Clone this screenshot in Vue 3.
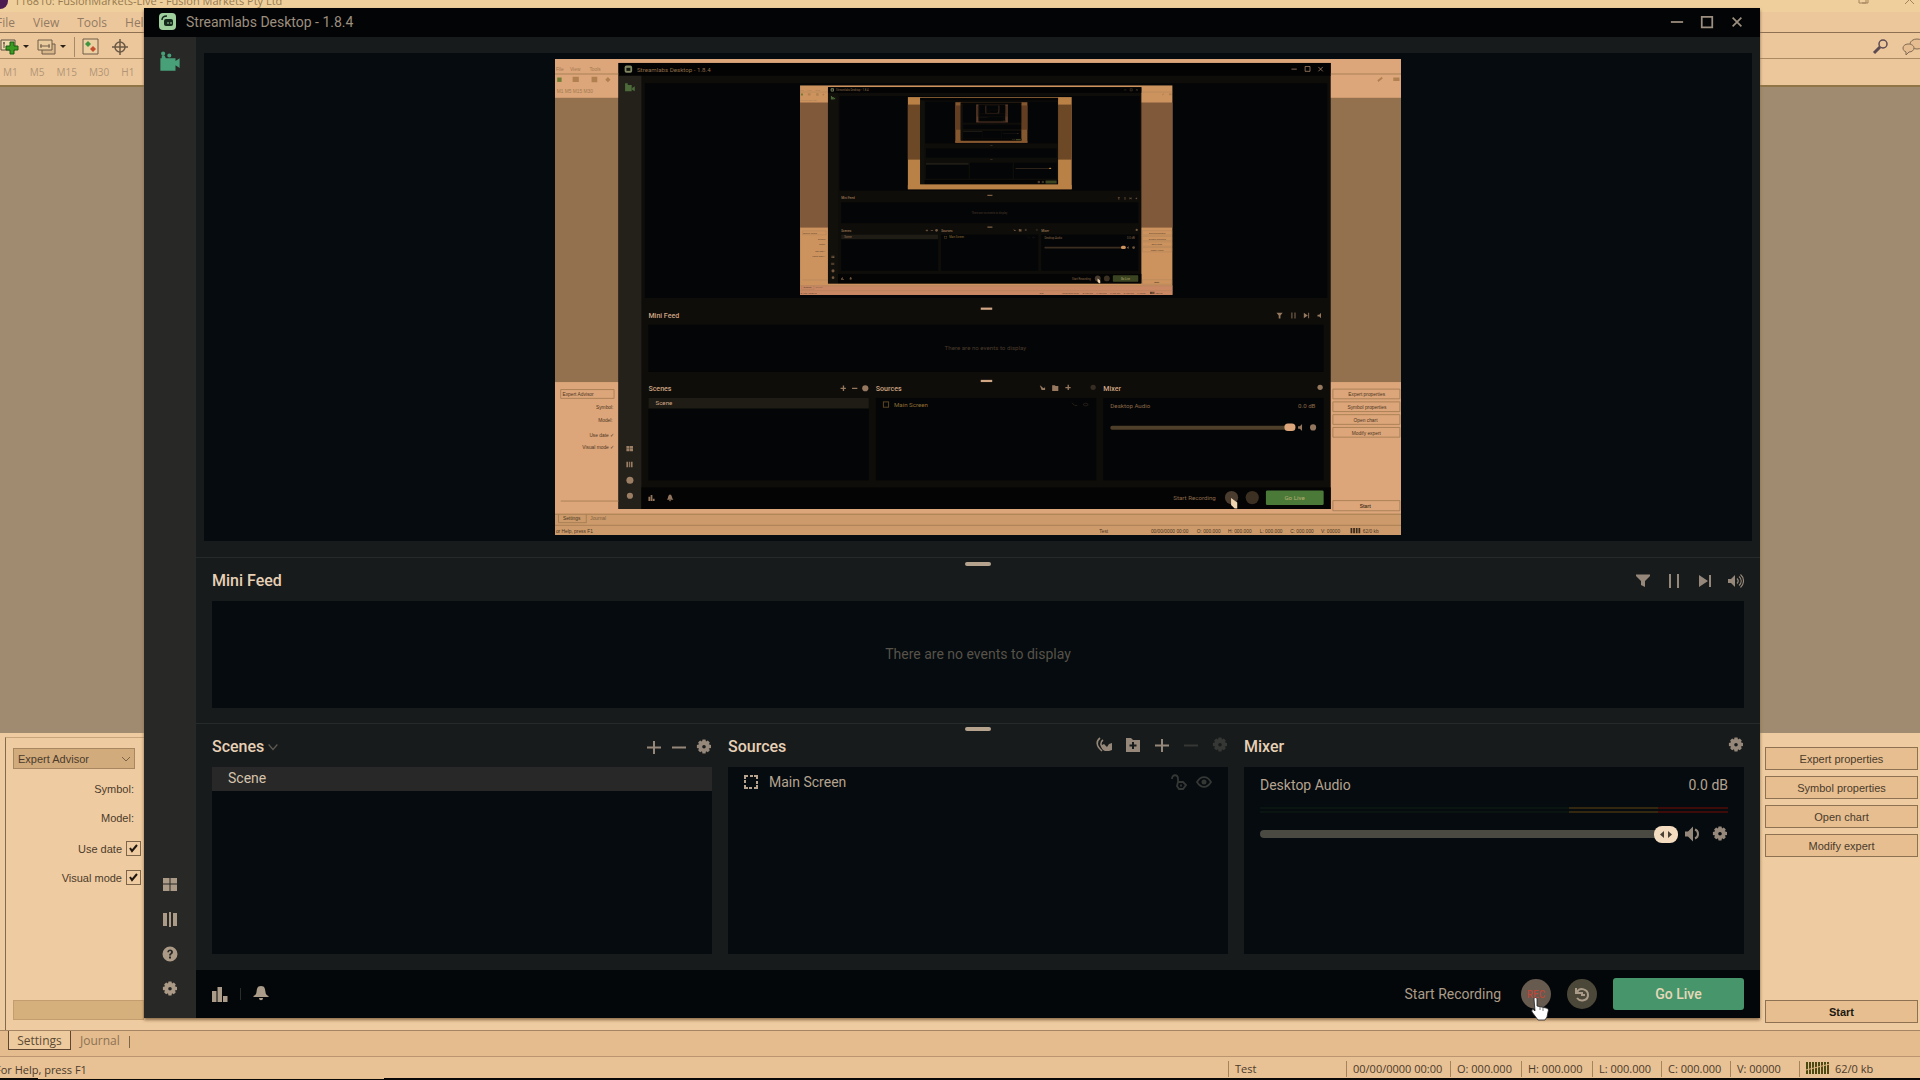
<template>
  <div class="desktop">
    <!-- Trading terminal in the background -->
    <section class="terminal">
      <div class="t-title">
        <span class="t-logo"></span>
        <span>116810: FusionMarkets-Live - Fusion Markets Pty Ltd</span>
        <svg class="t-title-btns" viewBox="0 0 62 12" aria-hidden="true">
          <path d="M1 -4h7v7h-7zM4 3h6v-7M47 4l9-9M56 4l-9-9" />
        </svg>
      </div>
      <nav class="t-menu">
        <a v-for="m in menus" :key="m" href="#">{{ m }}</a>
      </nav>
      <div class="t-tools">
        <button class="tool wide" aria-label="New order">
          <svg width="30" height="18" viewBox="0 0 30 18">
            <path d="M1 2h14v10H1z" fill="#efd9b0" stroke="#5c5040" />
            <path d="M4 4v6M3 5h2" stroke="#5c5040" />
            <path d="M10 4h4v4h4v4h-4v4h-4v-4H6V8h4z" fill="#3a9a22" stroke="#1d5a12" />
            <path d="M23 7h6l-3 3z" fill="#2a2218" />
          </svg>
        </button>
        <button class="tool wide" aria-label="Charts">
          <svg width="30" height="18" viewBox="0 0 30 18">
            <path d="M5 6h13v10H5z" fill="#d9b78a" stroke="#6e5d48" />
            <path d="M1 2h14v10H1z" fill="#e9cb9d" stroke="#6e5d48" />
            <path d="M3 8h10M4 6v4M12 6v4" stroke="#6e5d48" />
            <path d="M23 7h6l-3 3z" fill="#2a2218" />
          </svg>
        </button>
        <span class="tool-sep"></span>
        <button class="tool" aria-label="Market watch">
          <svg width="18" height="18" viewBox="0 0 18 18">
            <path d="M1 1h15v15H1z" fill="#ecd0a2" stroke="#6e5d48" />
            <path d="M6 3l3 3-3 3-3-3z" fill="#3f9440" />
            <path d="M11 8l3 3-3 3-3-3z" fill="#c4502e" />
          </svg>
        </button>
        <button class="tool cross" aria-label="Crosshair">
          <svg width="18" height="18" viewBox="0 0 18 18" fill="none" stroke="#6b5a44" stroke-width="1.5">
            <circle cx="9" cy="9" r="5" />
            <path d="M9 1v16M1 9h16" />
          </svg>
        </button>
        <span class="grow"></span>
        <button class="tool" aria-label="Search">
          <svg width="18" height="18" viewBox="0 0 18 18" fill="none" stroke="#5b4a52">
            <circle cx="12" cy="6" r="4" stroke-width="1.5" />
            <path d="M9 9l-6 6" stroke-width="3" />
          </svg>
        </button>
        <button class="tool chat" aria-label="Chat">
          <svg width="22" height="18" viewBox="0 0 22 18" fill="#e6bd90" stroke="#806a52">
            <ellipse cx="15" cy="6" rx="7" ry="5" />
            <path d="M6 6c4 0 6 2 6 4s-2 4-5 4l-3 3v-3c-2-1-3-2-3-4s2-4 5-4z" />
          </svg>
        </button>
      </div>
      <div class="t-frames">
        <button v-for="f in timeframes" :key="f">{{ f }}</button>
      </div>
      <div class="t-work"></div>

      <div class="tester">
        <form class="tester-left" @submit.prevent>
          <div class="combo">
            <select aria-label="Program type">
              <option>Expert Advisor</option>
            </select>
          </div>
          <label class="row">Symbol:</label>
          <label class="row">Model:</label>
          <label class="row check">Use date <input type="checkbox" checked /></label>
          <label class="row check">Visual mode <input type="checkbox" checked /></label>
          <span class="grow"></span>
          <div class="progress"></div>
        </form>
        <div class="tester-right">
          <button v-for="b in testerButtons" :key="b">{{ b }}</button>
          <span class="grow"></span>
          <button class="start">Start</button>
        </div>
      </div>

      <div class="t-tabs">
        <button class="active">Settings</button>
        <button>Journal</button>
        <span class="tab-sep"></span>
      </div>
      <footer class="t-status">
        <span class="help">For Help, press F1</span>
        <span v-for="c in status" :key="c.text" class="cell" :class="c.size">{{ c.text }}</span>
        <span class="cell conn">
          <svg width="24" height="14" viewBox="0 0 24 14" aria-hidden="true">
            <path d="M1 1v12M4 1v12M7 1v12M10 1v12M13 1v12M16 1v12M19 1v12M22 1v12" stroke="#4c4a10" stroke-width="2" />
            <path d="M0 9L24 3" stroke="#dfb57f" />
          </svg>
          62/0 kb
        </span>
      </footer>
      <div class="taskbar"><span></span></div>
    </section>

    <!-- Streamlabs window -->
    <main class="window">
      <header class="w-title">
        <svg width="17" height="17" viewBox="0 0 17 17" aria-hidden="true">
          <rect width="17" height="17" rx="4" fill="#9ecf9c" />
          <path d="M3 7c0-3 2-4 5-4" fill="none" stroke="#14281c" stroke-width="1.5" />
          <rect x="5" y="6" width="9" height="7" rx="2" fill="#14281c" />
          <path d="M9 9v2M12 9v2" stroke="#9ecf9c" />
        </svg>
        <h1>Streamlabs Desktop - 1.8.4</h1>
        <button aria-label="Minimize"><Icon name="winMin" :size="14" /></button>
        <button aria-label="Maximize"><Icon name="winMax" :size="14" /></button>
        <button aria-label="Close"><Icon name="winClose" :size="14" /></button>
      </header>

      <div class="w-body">
        <nav class="side">
          <button class="editor" aria-label="Editor"><Icon name="camera" :size="22" /></button>
          <span class="grow"></span>
          <button v-for="s in sideItems" :key="s.icon" :aria-label="s.label"><Icon :name="s.icon" /></button>
        </nav>

        <div class="content">
          <div class="preview">
            <svg class="canvas" viewBox="0 0 1920 1080" role="img" aria-label="Main Screen preview">
              <g v-for="(f, i) in frames" :key="i" :transform="f.transform">
                <rect width="1920" height="1080" :fill="f.light" />
                <rect y="88" width="1920" height="645" :fill="f.work" />
                <rect y="1031" width="1920" height="49" :fill="f.bar" />
                <rect x="144" y="9" width="1616" height="1012" fill="#0e0d0a" />
                <rect x="144" y="9" width="1616" height="29" fill="#030304" />
                <rect x="144" y="38" width="52" height="983" :fill="i ? '#12100b' : '#24211a'" />
                <rect x="204" y="55" width="1548" height="487" fill="#040506" />
                <rect x="212" y="603" width="1532" height="107" fill="#040506" />
                <rect v-for="x in [212, 728, 1244]" :key="x" :x="x" y="769" width="500" height="187" fill="#040506" />
                <rect x="196" y="972" width="1564" height="49" fill="#040404" />
                <rect x="212" y="769" width="500" height="24" fill="#1f1c16" />
                <rect x="966" y="564" width="26" height="5" :fill="f.ink" />
                <rect x="966" y="728" width="26" height="5" :fill="f.ink" />
                <rect x="1260" y="832" width="400" height="9" rx="4" :fill="i ? '#3b2e20' : '#4e3f2a'" />
                <rect x="1655" y="827" width="25" height="17" rx="8" :fill="f.light" />
                <rect x="1613" y="979" width="131" height="33" rx="3" :fill="i ? '#3b4420' : '#4b7a38'" />
                <circle cx="1535" cy="995" r="15" fill="#4a3c2e" />
                <circle cx="1582" cy="995" r="15" fill="#3b3022" />
                <template v-if="i < 2">
                  <g :fill="f.ink" class="mini-ui">
                    <text x="186" y="30" fill="#8f6c46">Streamlabs Desktop - 1.8.4</text>
                    <text x="212" y="588" class="b">Mini Feed</text>
                    <text x="884" y="661" fill="#4a3a2b">There are no events to display</text>
                    <text x="212" y="754" class="b">Scenes</text>
                    <text x="228" y="786">Scene</text>
                    <text x="728" y="754" class="b">Sources</text>
                    <text x="769" y="789" fill="#8f6f35">Main Screen</text>
                    <text x="1244" y="754" class="b">Mixer</text>
                    <text x="1260" y="792" fill="#8c6a48">Desktop Audio</text>
                    <text x="1686" y="792" fill="#8c6a48">0.0 dB</text>
                    <text x="1403" y="1001" fill="#8c6a48">Start Recording</text>
                    <text x="1655" y="1001" fill="#b7ad70">Go Live</text>
                  </g>
                  <g class="mini-os" fill="#4b351f">
                    <text x="17" y="765">Expert Advisor</text>
                    <text x="93" y="795">Symbol:</text>
                    <text x="98" y="824">Model:</text>
                    <text x="78" y="857">Use date ✓</text>
                    <text x="62" y="886">Visual mode ✓</text>
                    <text x="18" y="1047">Settings</text>
                    <text x="80" y="1047" fill="#80603f">Journal</text>
                    <text x="2" y="1076">or Help, press F1</text>
                    <text x="1800" y="765">Expert properties</text>
                    <text x="1798" y="795">Symbol properties</text>
                    <text x="1812" y="824">Open chart</text>
                    <text x="1808" y="853">Modify expert</text>
                    <text x="1826" y="1018" class="b">Start</text>
                    <text x="1235" y="1076">Test</text>
                    <text x="1352" y="1076">00/00/0000 00:00</text>
                    <text x="1456" y="1076">O: 000.000</text>
                    <text x="1527" y="1076">H: 000.000</text>
                    <text x="1599" y="1076">L: 000.000</text>
                    <text x="1668" y="1076">C: 000.000</text>
                    <text x="1738" y="1076">V: 00000</text>
                    <text x="1833" y="1076">62/0 kb</text>
                    <text x="2" y="28" fill="#a0794f">File</text>
                    <text x="34" y="28" fill="#a0794f">View</text>
                    <text x="78" y="28" fill="#a0794f">Tools</text>
                    <text x="4" y="78" fill="#a0794f">M1 M5 M15 M30</text>
                  </g>
                  <g fill="none" stroke="#a57c52" stroke-width="2">
                    <path d="M0 34h144M1760 34h160M0 1033h1920M0 1058h1920M8 1033v19h63v-19" />
                    <path d="M13 750h121v20H13zM13 1003h131M1765 749h152v22h-152zM1765 778h152v22h-152zM1765 807h152v22h-152zM1765 836h152v22h-152zM1765 1002h152v23h-152z" />
                    <path d="M1805 1070h24" stroke="#3b2a1a" stroke-width="12" stroke-dasharray="4 2" />
                  </g>
                  <g :fill="f.ink" opacity="0.7">
                    <path d="M159 59h15v14h-15zM175 66l6-4v11l-6-3zM159 55h6v4h-6z" fill="#5d8a48" />
                    <rect x="158" y="15" width="17" height="16" rx="4" fill="#b5bf8a" />
                    <path d="M162 20h9v7h-9z" fill="#1a2214" />
                    <path d="M162 878h7v5h-7zM170 878h7v5h-7zM162 884h7v6h-7zM170 884h7v6h-7zM162 914h4v12h-4zM168 914h2v12h-2zM172 914h4v12h-4zM212 993h4v10h-4zM217 989h4v14h-4zM222 998h4v5h-4zM254 1000c3-2 2-12 7-12s4 10 8 12zM258 1001h6l-3 3z" />
                    <circle cx="170" cy="956" r="8" />
                    <circle cx="170" cy="991" r="7" />
                    <circle cx="704" cy="747" r="7" />
                    <circle cx="1736" cy="745" r="6" />
                    <circle cx="1720" cy="836" r="7" />
                    <circle cx="1221" cy="745" r="6" opacity="0.3" />
                    <path d="M648 746h12v3h-12zM653 741h3v12h-3zM674 746h12v3h-12zM1637 576h14l-5 6v7h-4v-7zM1671 575h2v14h-2zM1678 575h2v14h-2zM1699 576l9 6-9 6zM1709 576h2v12h-2zM1730 580h4l4-4v12l-4-4h-4zM1686 833h4l5-5v16l-5-5h-4zM1128 740h6l2 2h6v11h-14zM1158 744h12v3h-12zM1163 739h3v12h-3zM1100 740l4 3 4 4 4-2v6h-8z" />
                    <path d="M1671 23h12M1702 17h11v11h-11zM1732 18l10 10M1742 18l-10 10" fill="none" :stroke="f.ink" stroke-width="2" />
                    <rect x="745" y="778" width="12" height="12" fill="none" stroke="#8f6f35" stroke-width="2" />
                    <path d="M1173 780l6 6h6M1198 784c4-4 8-4 12 0-4 4-8 4-12 0z" fill="none" stroke="#3a3024" stroke-width="2" />
                  </g>
                  <path d="M5 42h10v10H5z" fill="#6f7c34" />
                  <path d="M40 40h14v12H40zM83 40h13v13H83zM120 41l6 6-6 6-6-6zM1866 48l10-8 2 4-10 8zM1902 42h14v8h-14z" fill="#b08050" />
                  <path d="M1534 996v16l8 8h6v-14z" fill="#f0d5ae" />
                </template>
              </g>
            </svg>
          </div>

          <section class="feed">
            <span class="handle"></span>
            <div class="head">
              <h2>Mini Feed</h2>
              <span class="grow"></span>
              <button aria-label="Filter"><Icon name="filter" /></button>
              <button aria-label="Pause"><Icon name="pause" /></button>
              <button aria-label="Skip"><Icon name="skip" /></button>
              <button aria-label="Mute"><Icon name="volume" /></button>
            </div>
            <div class="box empty">There are no events to display</div>
          </section>

          <section class="docks">
            <span class="handle"></span>
            <div class="dock">
              <div class="head scenes-head">
                <h2>Scenes</h2>
                <button class="chev" aria-label="Scene collections"><Icon name="chevron" :size="10" /></button>
                <span class="grow"></span>
                <button aria-label="Add scene"><Icon name="plus" /></button>
                <button aria-label="Remove scene"><Icon name="minus" /></button>
                <button aria-label="Scene settings"><Icon name="gear" /></button>
              </div>
              <div class="box">
                <div class="scene">Scene</div>
              </div>
            </div>

            <div class="dock">
              <div class="head">
                <h2>Sources</h2>
                <span class="grow"></span>
                <div class="dock-tools">
                  <button aria-label="Studio mode"><Icon name="signal" /></button>
                  <button aria-label="Add group"><Icon name="folder" /></button>
                  <button aria-label="Add source"><Icon name="plus" /></button>
                  <button class="dim" aria-label="Remove source"><Icon name="minus" /></button>
                  <button class="dim" aria-label="Source settings"><Icon name="gear" /></button>
                </div>
              </div>
              <div class="box">
                <div class="source">
                  <Icon name="capture" />
                  <span>Main Screen</span>
                  <span class="grow"></span>
                  <button class="dim" aria-label="Lock"><Icon name="unlock" /></button>
                  <button class="dim" aria-label="Visibility"><Icon name="eye" /></button>
                </div>
              </div>
            </div>

            <div class="dock">
              <div class="head">
                <h2>Mixer</h2>
                <span class="grow"></span>
                <div class="dock-tools">
                  <button aria-label="Mixer settings"><Icon name="gear" /></button>
                </div>
              </div>
              <div class="box mixer">
                <div class="mix-row">
                  <label for="volume">Desktop Audio</label>
                  <span>0.0 dB</span>
                </div>
                <div class="meter"></div>
                <div class="meter"></div>
                <div class="mix-ctl">
                  <input id="volume" type="range" min="0" max="100" value="100" />
                  <button aria-label="Mute audio"><Icon name="speaker" /></button>
                  <button aria-label="Audio settings"><Icon name="gear" /></button>
                </div>
              </div>
            </div>
          </section>

          <footer class="w-foot">
            <button aria-label="Stats"><Icon name="stats" /></button>
            <span class="foot-sep"></span>
            <button aria-label="Notifications"><Icon name="bell" /></button>
            <span class="grow"></span>
            <span class="rec-label">Start Recording</span>
            <button class="round rec">
              REC
              <svg class="cursor" width="20" height="24" viewBox="0 0 20 24" aria-hidden="true">
                <path d="M4 2c0-2 3-2 3 0v7l9 2c2 0 3 2 2 4l-1 5-2 3H8L2 15c-1-2 1-3 2-2l1 1z" fill="#fff" stroke="#222" stroke-width=".8" />
                <path d="M10 10v3M13 11v3" stroke="#555" stroke-width=".8" />
              </svg>
            </button>
            <button class="round" aria-label="Replay buffer"><Icon name="replay" /></button>
            <button class="live">Go Live</button>
          </footer>
        </div>
      </div>
    </main>
  </div>
</template>

<script setup>
import { h } from 'vue'

const menus = ['File', 'View', 'Tools', 'Help']
const timeframes = ['M1', 'M5', 'M15', 'M30', 'H1']
const testerButtons = ['Expert properties', 'Symbol properties', 'Open chart', 'Modify expert']
const status = [
  { text: 'Test', size: 'profile' },
  { text: '00/00/0000 00:00', size: 'date' },
  { text: 'O: 000.000', size: 'mid' },
  { text: 'H: 000.000', size: 'mid' },
  { text: 'L: 000.000' },
  { text: 'C: 000.000' },
  { text: 'V: 00000' },
]
const sideItems = [
  { icon: 'grid', label: 'Layout' },
  { icon: 'columns', label: 'Studio' },
  { icon: 'help', label: 'Help' },
  { icon: 'gear', label: 'Settings' },
]

// f = filled path, s = stroked path, all on a 16x16 grid
const icons = {
  winMin: { s: 'M1 8h14' },
  winMax: { s: 'M2 2h12v12H2z' },
  winClose: { s: 'M3 3l10 10M13 3L3 13' },
  camera: { f: 'M1 6h11v2l3-2v7l-3-2v4H1zM1.500 2.500a1.500 1.500 0 1 1 3 0a1.500 1.500 0 1 1-3 0zM2 4h2l1 2H2zM6 4a1.500 1.500 0 1 1 3 0a1.500 1.500 0 1 1-3 0z' },
  grid: { f: 'M1 2h6.500v5.500H1zM8.500 2H15v5.500H8.500zM1 8.500h6.500V15H1zM8.500 8.500H15V15H8.500z' },
  columns: { f: 'M1 2h4v13H1zM7 1h2v15H7zM11 2h4v13h-4z' },
  help: { f: 'M8 .500a7.500 7.500 0 1 0 0 15a7.500 7.500 0 1 0 0-15zM7 10.500h2v2H7zM7 9.500c0-2 2-2 2-3.500 0-1.300-2-1.300-2 .300H5.300C5.300 2.500 11 2.700 11 6c0 2-2 2-2 3.500z' },
  gear: { f: 'M6.500.500h3l.5 2 1.800-1 2 2-1 1.800 2.200.6v3l-2.200.5 1 1.900-2 2-1.800-1-.5 2.200h-3l-.5-2.200-1.900 1-2-2 1-1.900-2.200-.5v-3l2.200-.6-1-1.800 2-2 1.900 1zM8 6a1.800 1.800 0 1 0 0 3.600a1.800 1.800 0 1 0 0-3.600z' },
  filter: { f: 'M1 1.500h14v1.500L10 8v6l-4-2V8L1 3z' },
  pause: { f: 'M3 1h2v14H3zM11 1h2v14h-2z' },
  skip: { f: 'M2 2l9 6-9 6zM12 2h2v12h-2z' },
  volume: { f: 'M0 6h3l4-4v12l-4-4H0z', s: 'M9 5.500c1.500 1.500 1.500 3.500 0 5M11 3.500c3 2.500 3 6.500 0 9M12.500 1.500c4 3.500 4 9.500 0 13', w: 1.1 },
  speaker: { f: 'M1 5.500h3l5-5v15l-5-5H1z', s: 'M11 3.500c4 1.500 4 7.500 0 9' },
  chevron: { s: 'M1 4l7 8 7-8' },
  plus: { s: 'M8 2v13M1 8.500h14', w: 2 },
  minus: { s: 'M1 8.500h14', w: 2 },
  signal: { f: 'M6 8l2-1 3 3 2-3 3-1v7l-3 1H9c-3-1-4-3-3-6z', s: 'M4 1C0 4 0 9 6 14M7 3C4 5 4 9 8 12', w: 1.6 },
  folder: { f: 'M1 1h5l2 2h7v12H1zM7 5v2.500H4.500v2H7V12h2V9.500h2.500v-2H9V5z' },
  capture: { s: 'M2 5V2h3M7 2h3M11 2h3v3M14 7v3M14 11v3h-3M9 14H6M5 14H2v-3M2 9V6' },
  unlock: { s: 'M1 5c0-5 6-5 6 0v2M7 8h5l3 3-3 4H8l-2-3zM10 10.500v2', w: 1.8 },
  eye: { s: 'M1 8c4-6.500 10-6.500 14 0-4 6.500-10 6.500-14 0z', f: 'M8 5.500a2.500 2.500 0 1 0 0 5a2.500 2.500 0 1 0 0-5z', w: 1.8 },
  stats: { f: 'M0 5h4.500v11H0zM5.500 1H10v15H5.500zM11 10h4.500v6H11z' },
  bell: { f: 'M8 0c4 0 4 3 4.500 6 .3 3 1.500 3 3 4v1H.500v-1c1.500-1 2.700-1 3-4C4 3 4 0 8 0zM6 12h4c0 3-4 3-4 0z' },
  replay: { s: 'M2 2v5h5M3 6c3-5 11-3 11 3 0 6-8 7-11 3M8 6v3h3', w: 2 },
}

const Icon = (props) => {
  const icon = icons[props.name]
  const size = props.size || 16
  return h('svg', { width: size, height: size, viewBox: '0 0 16 16', 'aria-hidden': 'true' }, [
    icon.f && h('path', { d: icon.f, fill: 'currentColor', 'fill-rule': 'evenodd' }),
    icon.s && h('path', { d: icon.s, fill: 'none', stroke: 'currentColor', 'stroke-width': icon.w || 2 }),
  ])
}
Icon.props = ['name', 'size']

// The captured screen shows itself again, each time smaller and darker
const shades = [
  { light: '#dda67a', work: '#93704e', bar: '#cd9b6b', ink: '#d0a684' },
  { light: '#cd935f', work: '#80583a', bar: '#c98764', ink: '#9c7754' },
  { light: '#b98146', work: '#6d4827', bar: '#b98146', ink: '#705238' },
  { light: '#85572f', work: '#623d22', bar: '#85572f', ink: '#3f2d1c' },
  { light: '#5c3b2a', work: '#4a2f20', bar: '#5c3b2a', ink: '#2b1d14' },
  { light: '#3c281d', work: '#302018', bar: '#3c281d', ink: '#1c130d' },
]
const frames = shades.map((shade, i) => ({
  ...shade,
  transform: 'translate(556 60) scale(0.44) '.repeat(i).trim() || undefined,
}))
</script>

<style>
body { background: #edc99e; }
</style>

<style scoped>
.desktop {
  position: relative;
  min-height: 100vh;
  display: flex;
  overflow: hidden;
  font-family: Roboto, sans-serif;
  font-size: 14px;
}
button, select {
  font: inherit;
  color: inherit;
  background: none;
  border: 0;
  padding: 0;
}
svg { display: block; flex-shrink: 0; }
h1, h2 { margin: 0; }
.grow { flex: 1; }

/* Terminal */
.terminal {
  flex: 1;
  min-width: 0;
  display: flex;
  flex-direction: column;
  background: #edc79c;
  color: #4b3b2b;
  font-family: "Open Sans", sans-serif;
  font-size: 12px;
}
.t-title {
  height: 12px;
  display: flex;
  align-items: center;
  gap: 6px;
  line-height: 12px;
  background: #efd09c;
  color: #96794f;
}
.t-title > span:nth-child(2) { margin-top: -10px; font-size: 11px; }
.t-logo {
  width: 8px;
  height: 16px;
  margin-top: -10px;
  border-radius: 0 8px 8px 0;
  background: #4c1c50;
}
.t-title-btns {
  width: 62px;
  height: 12px;
  margin-left: auto;
  fill: none;
  stroke: #a5825c;
}
.t-menu {
  height: 20px;
  display: flex;
  align-items: center;
  gap: 18px;
  border-bottom: 1px solid #8d7051;
  overflow: hidden;
}
.t-menu a { color: #917b62; text-decoration: none; }
.t-menu a:first-child { margin-left: -4px; }
.t-tools {
  height: 26px;
  display: flex;
  align-items: center;
  gap: 7px;
  padding-top: 2px;
  box-sizing: border-box;
  border-bottom: 1px solid #ad8b62;
}
.tool-sep { width: 1px; height: 20px; background: #a58a65; }
.cross { margin-left: 4px; }
.chat { margin: 0 -4px 0 6px; }
.t-frames {
  height: 28px;
  display: flex;
  align-items: center;
  gap: 12px;
  padding-left: 3px;
  font-size: 10px;
  color: #b09676;
  box-sizing: border-box;
  border-bottom: 2px solid #907647;
}
.t-work { flex: 1; background: #a08b70; }

.tester {
  height: 298px;
  display: flex;
  justify-content: space-between;
  background: #efcba1;
  font-family: "Liberation Sans", sans-serif;
  font-size: 11px;
  border-bottom: 1px solid #a58464;
  box-sizing: border-box;
}
.tester-left {
  width: 139px;
  margin: 4px 0 0 5px;
  padding: 10px 0 10px 7px;
  box-sizing: border-box;
  border-left: 1px solid #83694e;
  border-top: 1px solid #c6a57c;
  display: flex;
  flex-direction: column;
}
.combo {
  width: 122px;
  height: 21px;
  margin-bottom: 5px;
}
.combo select {
  appearance: none;
  width: 100%;
  height: 100%;
  padding: 0 4px;
  border: 1px solid #a88760;
  background: #d2ab7d url("data:image/svg+xml,%3Csvg xmlns='http://www.w3.org/2000/svg' width='10' height='8' viewBox='0 0 10 8'%3E%3Cpath d='M1 2l4 4 4-4' fill='none' stroke='%237a6248'/%3E%3C/svg%3E") no-repeat right 3px center;
}
.row {
  height: 29px;
  display: flex;
  align-items: center;
  justify-content: flex-end;
  padding-right: 10px;
}
.row.check { padding: 4px 3px 0 0; gap: 4px; height: 25px; }
.row input {
  appearance: none;
  width: 15px;
  height: 15px;
  margin: 0;
  border: 1px solid #7d6549;
  background: url("data:image/svg+xml,%3Csvg xmlns='http://www.w3.org/2000/svg' viewBox='0 0 13 13'%3E%3Cpath d='M3 6l2 3 5-6' fill='none' stroke='%23201810' stroke-width='2'/%3E%3C/svg%3E");
}
.progress { height: 18px; background: #d6b07c; border: 1px solid #c39d6e; }
.tester-right {
  width: 153px;
  padding: 14px 2px 7px 0;
  display: flex;
  flex-direction: column;
  gap: 6px;
}
.tester-right button {
  height: 23px;
  border: 1px solid #8e7150;
  background: #e6be90;
}
.tester-right .start { font-weight: bold; color: #201810; }

.t-tabs {
  height: 25px;
  display: flex;
  align-items: flex-start;
  gap: 9px;
  padding-left: 8px;
  box-sizing: border-box;
  background: #e5bc8e;
}
.t-tabs button { height: 19px; color: #8b7253; }
.t-tabs .active {
  width: 63px;
  color: #5c4a33;
  background: #eecb9e;
  border: solid #5e4632;
  border-width: 0 1px 1px;
}
.tab-sep { width: 1px; height: 12px; margin-top: 5px; background: #7d6549; }
.t-status {
  height: 22px;
  display: flex;
  align-items: center;
  padding-top: 3px;
  box-sizing: border-box;
  border-top: 1px solid #bb9470;
  background: #e8c194;
  white-space: nowrap;
  font-size: 11px;
}
.help { flex: 1; margin-left: -5px; }
.cell {
  width: 69px;
  height: 16px;
  line-height: 16px;
  padding-left: 6px;
  box-sizing: border-box;
  border-left: 1px solid #a5845c;
}
.mid { width: 71px; }
.profile { width: 118px; }
.date { width: 104px; }
.conn { width: 121px; display: flex; gap: 5px; }
.taskbar { height: 2px; background: #0a0806; }
.taskbar span { display: block; height: 1px; margin: 0 80% 0 38px; background: #e6bf90; }

/* Window */
.window {
  position: absolute;
  top: 8px;
  bottom: 62px;
  left: 7.5%;
  right: 8.333%;
  display: flex;
  flex-direction: column;
  background: #181b1b;
  color: #b5a390;
  box-shadow: 0 2px 3px #8d6c4a;
}
.w-title {
  height: 29px;
  display: flex;
  align-items: center;
  gap: 16px;
  padding: 0 16px 2px 15px;
  box-sizing: border-box;
  background: #030406;
  color: #9d8f7f;
}
.w-title h1 { flex: 1; margin-left: -6px; font-size: 14px; font-weight: 400; }
.w-body { flex: 1; display: flex; min-height: 0; }
.side {
  width: 52px;
  display: flex;
  flex-direction: column;
  align-items: center;
  gap: 19px;
  padding: 13px 0 21px;
  box-sizing: border-box;
  background: #282826;
  color: #ab9a85;
}
.editor { color: #48a078; }
.content { flex: 1; min-width: 0; display: flex; flex-direction: column; }

.preview {
  flex: 1;
  min-height: 0;
  margin: 16px 8px;
  padding: 6px 0;
  box-sizing: border-box;
  display: flex;
  justify-content: center;
  background: #050b0e;
}
.canvas { height: 100%; aspect-ratio: 16 / 9; }
.mini-ui { font-family: Roboto, sans-serif; font-size: 14px; }
.mini-ui .b { font-size: 16px; font-weight: 500; }
.mini-os { font-family: "Liberation Sans", sans-serif; font-size: 11px; }
.mini-os .b { font-weight: bold; }

.feed, .docks { position: relative; border-top: 1px solid #252a2a; }
.feed { padding: 4px 16px 15px; }
.handle {
  position: absolute;
  top: 4px;
  left: 50%;
  width: 26px;
  height: 4px;
  margin-left: -13px;
  border-radius: 2px;
  background: #b5a38e;
}
.head {
  height: 39px;
  display: flex;
  align-items: center;
  gap: 15px;
  padding-bottom: 2px;
  box-sizing: border-box;
  color: #95887a;
}
.head h2 { font-size: 16px; font-weight: 500; color: #e6d0b6; }
.head .chev { color: #5c5a51; }
.scenes-head { gap: 9px; }
.scenes-head .chev { margin-left: -5px; }
.dock-tools { display: flex; gap: 13px; padding-bottom: 4px; }
.dim { color: #353735; }
.box { background: #050b0e; }
.empty {
  height: 107px;
  display: grid;
  place-items: center;
  padding-bottom: 2px;
  box-sizing: border-box;
  color: #57524a;
}
.docks {
  display: grid;
  grid-template-columns: repeat(3, 1fr);
  gap: 16px;
  padding: 4px 16px 16px;
}
.docks .handle { top: 3px; }
.dock .box { height: 187px; }
.scene {
  height: 24px;
  line-height: 22px;
  padding-left: 16px;
  background: #272827;
  color: #d6c3ac;
}
.source {
  height: 30px;
  display: flex;
  align-items: center;
  gap: 9px;
  padding: 0 16px 0 15px;
}
.source > span:nth-child(2) { margin-left: 1px; }
.mixer { padding: 9px 16px; box-sizing: border-box; }
.mix-row { display: flex; justify-content: space-between; line-height: 18px; margin-bottom: 13px; }
.meter {
  height: 2px;
  margin-bottom: 2px;
  background: linear-gradient(90deg, #0a1512 66%, #33280f 66% 85%, #3d0c0a 85%);
}
.mix-ctl { display: flex; align-items: center; gap: 12px; height: 18px; margin-top: 12px; }
.mix-ctl input {
  appearance: none;
  flex: 1;
  min-width: 0;
  height: 8px;
  margin: 0 -6px 0 0;
  border-radius: 4px;
  background: #4a4a42;
}
.mix-ctl input::-webkit-slider-thumb {
  appearance: none;
  width: 24px;
  height: 17px;
  border-radius: 8px;
  background: #f3dcbf url("data:image/svg+xml,%3Csvg xmlns='http://www.w3.org/2000/svg' viewBox='0 0 24 17'%3E%3Cpath d='M10 5v7L6 8.500zM14 5v7l4-3.500z' fill='%234a4034'/%3E%3C/svg%3E");
}
.mix-ctl button { color: #95887a; }

.w-foot {
  height: 48px;
  display: flex;
  align-items: center;
  gap: 12px;
  padding: 0 16px;
  background: #040709;
  color: #ab9c89;
}
.foot-sep { width: 1px; height: 12px; background: #2b2d2b; }
.round {
  width: 30px;
  height: 30px;
  margin-left: 4px;
  display: grid;
  place-items: center;
  border-radius: 50%;
  background: #4c4839;
}
.rec-label { margin-right: 4px; }
.rec {
  position: relative;
  background: #675b50;
  color: #b8493b;
  font-size: 10px;
  font-weight: 500;
}
.cursor { position: absolute; top: 18px; left: 9px; }
.live {
  width: 131px;
  height: 32px;
  margin-left: 4px;
  border-radius: 3px;
  background: #46956b;
  color: #e6d8b9;
  font-weight: 500;
}
</style>
